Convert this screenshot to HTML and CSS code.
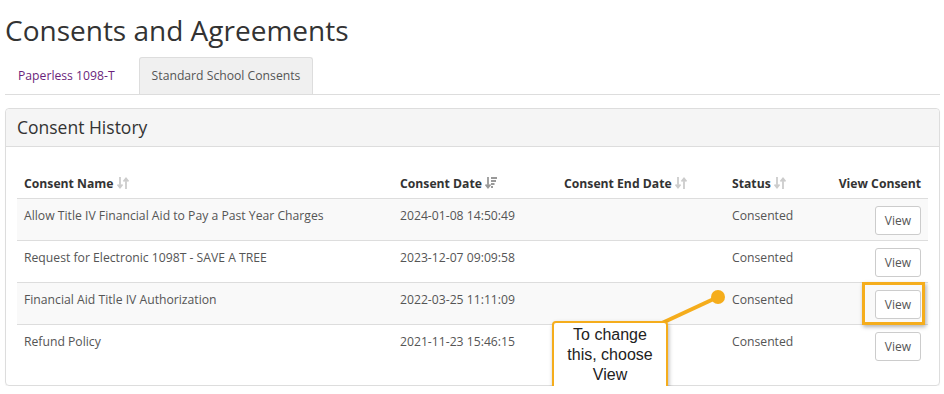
FILE: index.html
```html
<!DOCTYPE html>
<html lang="en">
<head>
    <meta charset="UTF-8">
    <meta name="viewport" content="width=device-width, initial-scale=1.0">
    <title>Consents and Agreements</title>
    <link rel="stylesheet" href="styles.css">
</head>
<body>
    <div class="page">
        <h1>Consents and Agreements</h1>

        <ul class="tabs">
            <li><a href="#" class="tab visited">Paperless 1098-T</a></li>
            <li><a href="#" class="tab active">Standard School Consents</a></li>
        </ul>

        <div class="panel">
            <div class="panel-heading">Consent History</div>
            <div class="panel-body">
                <div class="table-wrap">
                    <table class="consents">
                        <colgroup>
                            <col class="c-name">
                            <col class="c-date">
                            <col class="c-end">
                            <col class="c-status">
                            <col class="c-view">
                        </colgroup>
                        <thead>
                            <tr>
                                <th>Consent Name <svg class="sort" viewBox="0 0 12 14"><path d="M3 1v10M0.5 8.5L3 11.5L5.5 8.5M9 13V3M6.5 5.5L9 2.5L11.5 5.5"/></svg></th>
                                <th>Consent Date <svg class="sort on" viewBox="0 0 12 14"><path d="M3 1v10M0.5 8.5L3 11.5L5.5 8.5M6 2h6M6 5h5M6 8h3.5M6 11h2"/></svg></th>
                                <th>Consent End Date <svg class="sort" viewBox="0 0 12 14"><path d="M3 1v10M0.5 8.5L3 11.5L5.5 8.5M9 13V3M6.5 5.5L9 2.5L11.5 5.5"/></svg></th>
                                <th>Status <svg class="sort" viewBox="0 0 12 14"><path d="M3 1v10M0.5 8.5L3 11.5L5.5 8.5M9 13V3M6.5 5.5L9 2.5L11.5 5.5"/></svg></th>
                                <th class="right">View Consent</th>
                            </tr>
                        </thead>
                        <tbody>
                            <tr>
                                <td>Allow Title IV Financial Aid to Pay a Past Year Charges</td>
                                <td>2024-01-08 14:50:49</td>
                                <td></td>
                                <td>Consented</td>
                                <td class="right"><button>View</button></td>
                            </tr>
                            <tr>
                                <td>Request for Electronic 1098T - SAVE A TREE</td>
                                <td>2023-12-07 09:09:58</td>
                                <td></td>
                                <td>Consented</td>
                                <td class="right"><button>View</button></td>
                            </tr>
                            <tr>
                                <td>Financial Aid Title IV Authorization</td>
                                <td>2022-03-25 11:11:09</td>
                                <td></td>
                                <td>Consented</td>
                                <td class="right"><span class="highlight"><button>View</button></span></td>
                            </tr>
                            <tr>
                                <td>Refund Policy</td>
                                <td>2021-11-23 15:46:15</td>
                                <td></td>
                                <td>Consented</td>
                                <td class="right"><button>View</button></td>
                            </tr>
                        </tbody>
                    </table>

                    <svg class="connector" width="80" height="50" viewBox="0 0 80 50">
                        <line x1="12" y1="38" x2="68" y2="12"/>
                        <circle cx="68" cy="12" r="7"/>
                    </svg>
                    <div class="callout">To change this, choose View</div>
                </div>
            </div>
        </div>
    </div>
</body>
</html>
```

FILE: styles.css
```css
body {
    margin: 0;
    font-family: "Open Sans", "Noto Sans", sans-serif;
    font-size: 12.2px;
    color: #555;
    background-color: white;
}
.page {
    padding: 0 4px 0 5px;
}
h1 {
    margin: 0;
    padding-top: 10px;
    font-size: 28px;
    font-weight: normal;
    line-height: 40px;
    color: #333;
}
.tabs {
    display: flex;
    list-style: none;
    margin: 7px 0 0;
    padding: 0;
    border-bottom: 1px solid #ddd;
}
.tab {
    display: block;
    padding: 0 12px;
    line-height: 36px;
    text-decoration: none;
    border: 1px solid transparent;
    border-bottom: none;
    border-radius: 3px 3px 0 0;
}
.tab.visited {
    color: #6b1f7c;
    margin-right: 11px;
}
.tab.active {
    color: #555;
    background-color: #f0f0f0;
    border-color: #ddd;
}
.panel {
    margin-top: 13px;
    border: 1px solid #ddd;
    border-radius: 4px;
    box-shadow: 0 1px 1px rgba(0,0,0,0.05);
}
.panel-heading {
    padding: 0 11px;
    line-height: 37px;
    font-size: 17.5px;
    color: #333;
    background-color: #f5f5f5;
    border-bottom: 1px solid #ddd;
    border-radius: 4px 4px 0 0;
}
.panel-body {
    padding: 21px 11px 19px;
}
.table-wrap {
    position: relative;
}
.consents {
    width: 100%;
    border-collapse: collapse;
    table-layout: fixed;
}
.c-name { width: 376px; }
.c-date { width: 164px; }
.c-end { width: 168px; }
.c-status { width: 100px; }
.consents th {
    text-align: left;
    padding: 7px 7px 5px;
    line-height: 18px;
    color: #333;
    font-weight: bold;
    border-bottom: 1px solid #ddd;
    white-space: nowrap;
}
.consents td {
    vertical-align: top;
    padding: 8px 7px 5px;
    line-height: 18px;
    border-top: 1px solid #ddd;
}
.consents td.right {
    padding-top: 7px;
    padding-bottom: 5px;
}
.consents tbody tr:first-child td {
    border-top: none;
}
.consents tbody tr:nth-child(odd) {
    background-color: #f9f9f9;
}
.consents .right {
    text-align: right;
}
.sort {
    width: 12px;
    height: 14px;
    vertical-align: -2px;
    fill: none;
    stroke: #ccc;
    stroke-width: 1.8;
}
.sort.on {
    stroke: #999;
}
button {
    font-family: inherit;
    font-size: 12px;
    color: #555;
    background-color: white;
    border: 1px solid #ccc;
    border-radius: 3px;
    padding: 0 9px;
    height: 29px;
    cursor: pointer;
}
.highlight {
    position: relative;
    display: inline-block;
}
.highlight::after {
    content: "";
    position: absolute;
    left: -13px;
    right: -4px;
    top: -8px;
    bottom: -6px;
    border: 3px solid #f5ad1c;
    box-shadow: 1px 2px 4px rgba(0,0,0,0.3);
}
.connector {
    position: absolute;
    left: 633px;
    top: 117px;
}
.connector line {
    stroke: #f5ad1c;
    stroke-width: 4;
}
.connector circle {
    fill: #f5ad1c;
}
.callout {
    position: absolute;
    left: 535px;
    top: 153px;
    width: 102px;
    padding: 2px 5px 3px;
    font-family: "Liberation Sans", Arial, sans-serif;
    font-size: 16px;
    line-height: 20px;
    color: #222;
    text-align: center;
    background-color: white;
    border: 2px solid #f5ad1c;
    border-radius: 4px;
    box-shadow: 1px 2px 4px rgba(0,0,0,0.3);
}
```
